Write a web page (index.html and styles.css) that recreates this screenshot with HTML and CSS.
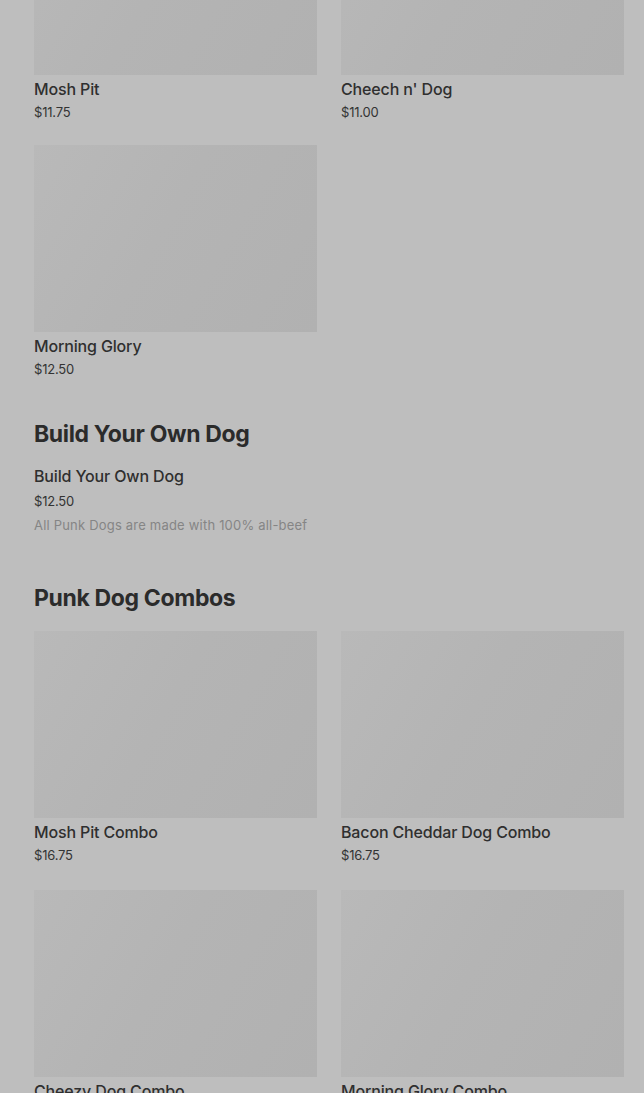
FILE: index.html
```html
<!DOCTYPE html>
<html lang="en">
<head>
<meta charset="utf-8">
<title>Menu</title>
<link rel="stylesheet" href="styles.css">
</head>
<body>
<main class="menu">
  <section class="section">
    <div class="grid">
      <div class="card"><div class="thumb"></div><div class="name">Mosh Pit</div><div class="price">$11.75</div></div>
      <div class="card"><div class="thumb"></div><div class="name">Cheech n' Dog</div><div class="price">$11.00</div></div>
      <div class="card"><div class="thumb"></div><div class="name">Morning Glory</div><div class="price">$12.50</div></div>
    </div>
  </section>
  <section class="section">
    <h2 class="heading">Build Your Own Dog</h2>
    <div class="item">
      <div class="name">Build Your Own Dog</div>
      <div class="price">$12.50</div>
      <div class="desc">All Punk Dogs are made with 100% all-beef</div>
    </div>
  </section>
  <section class="section">
    <h2 class="heading">Punk Dog Combos</h2>
    <div class="grid combos">
      <div class="card"><div class="thumb"></div><div class="name">Mosh Pit Combo</div><div class="price">$16.75</div></div>
      <div class="card"><div class="thumb"></div><div class="name">Bacon Cheddar Dog Combo</div><div class="price">$16.75</div></div>
      <div class="card"><div class="thumb"></div><div class="name">Cheezy Dog Combo</div><div class="price">$16.75</div></div>
      <div class="card"><div class="thumb"></div><div class="name">Morning Glory Combo</div><div class="price">$16.75</div></div>
    </div>
  </section>
</main>
</body>
</html>
```
FILE: styles.css
```css
html, body {
  margin: 0;
  padding: 0;
  background: #bebebe;
  overflow: hidden;
}
body {
  font-family: Inter, "Noto Sans", sans-serif;
  color: #2e2e2e;
}
.menu {
  margin-top: -112px;
  padding: 0 20px 0 34px;
}
.section + .section {
  margin-top: 41px;
}
.section:last-child {
  margin-top: 49px;
}
.grid {
  display: grid;
  grid-template-columns: 283px 283px;
  column-gap: 24px;
  row-gap: 24px;
}
.grid.combos {
  row-gap: 26px;
}
.thumb {
  height: 187px;
  background: linear-gradient(120deg, #b9b9b9 0%, #b4b4b4 45%, #b1b1b1 100%);
  margin-bottom: 4px;
}
.name {
  font-size: 16px;
  line-height: 20px;
  font-weight: 500;
  letter-spacing: -0.15px;
  color: #2f2f2f;
}
.price {
  margin-top: 4px;
  font-size: 13px;
  line-height: 18px;
  font-weight: 400;
  letter-spacing: -0.2px;
  color: #333;
}
.heading {
  margin: 0 0 17px;
  font-size: 23px;
  line-height: 30px;
  font-weight: 700;
  letter-spacing: -0.35px;
  color: #2b2b2b;
}
.section:last-child .heading {
  margin-bottom: 18px;
}
.item .price {
  margin-top: 6px;
}
.desc {
  margin-top: 6px;
  font-size: 13px;
  line-height: 18px;
  letter-spacing: 0.2px;
  color: #858585;
}
```
